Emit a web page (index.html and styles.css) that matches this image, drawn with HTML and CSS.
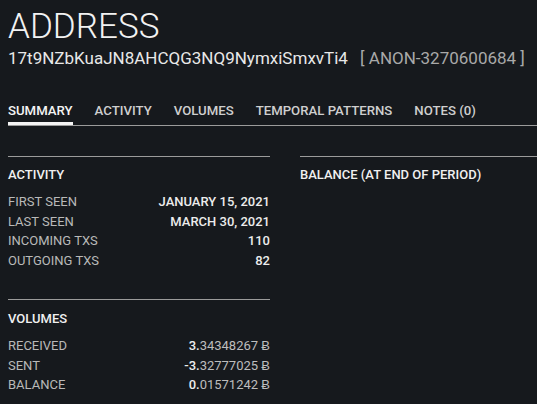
FILE: index.html
```html
<!DOCTYPE html>
<html>
<head>
<meta charset="utf-8">
<link rel="stylesheet" href="styles.css">
</head>
<body>
<div class="page">
  <h1 class="title">ADDRESS</h1>
  <div class="addr">17t9NZbKuaJN8AHCQG3NQ9NymxiSmxvTi4 <span class="anon">[ ANON-3270600684 ]</span></div>
  <nav class="tabs">
    <span class="tab active">SUMMARY</span>
    <span class="tab">ACTIVITY</span>
    <span class="tab">VOLUMES</span>
    <span class="tab">TEMPORAL PATTERNS</span>
    <span class="tab">NOTES (0)</span>
  </nav>
  <div class="cols">
    <div class="col">
      <section class="sec">
        <h2 class="sec-title">ACTIVITY</h2>
        <div class="row"><span class="lbl">FIRST SEEN</span><span class="val">JANUARY 15, 2021</span></div>
        <div class="row"><span class="lbl">LAST SEEN</span><span class="val">MARCH 30, 2021</span></div>
        <div class="row"><span class="lbl">INCOMING TXS</span><span class="val">110</span></div>
        <div class="row"><span class="lbl">OUTGOING TXS</span><span class="val">82</span></div>
      </section>
      <section class="sec sec2">
        <h2 class="sec-title">VOLUMES</h2>
        <div class="row"><span class="lbl">RECEIVED</span><span class="num"><b>3.</b>34348267 Ƀ</span></div>
        <div class="row"><span class="lbl">SENT</span><span class="num"><b>-3.</b>32777025 Ƀ</span></div>
        <div class="row"><span class="lbl">BALANCE</span><span class="num"><b>0.</b>01571242 Ƀ</span></div>
      </section>
    </div>
    <div class="col col-right">
      <section class="sec">
        <h2 class="sec-title">BALANCE (AT END OF PERIOD)</h2>
      </section>
    </div>
  </div>
</div>
</body>
</html>
```

FILE: styles.css
```css
html, body {
  margin: 0;
  padding: 0;
  background: #16191d;
  overflow: hidden;
}
body {
  font-family: Roboto, "Liberation Sans", sans-serif;
  color: #e6e6e6;
  width: 537px;
  height: 404px;
}
.page {
  padding: 7px 0 0 8px;
}
.title {
  margin: 0;
  font-size: 35px;
  font-weight: 300;
  line-height: 40px;
  color: #f2f2f2;
}
.addr {
  margin-top: 1px;
  font-size: 17px;
  line-height: 20px;
  color: #e8e8e8;
  white-space: nowrap;
}
.anon {
  margin-left: 8px;
  color: #a9a9a9;
}
.tabs {
  margin-top: 35px;
  display: flex;
  gap: 22px;
  border-bottom: 1px solid #9b9b9b;
}
.tab {
  font-size: 13.2px;
  font-weight: 500;
  line-height: 16px;
  padding: 0 0 6px;
  color: #cfcfcf;
  position: relative;
}
.tab.active {
  color: #f4f4f4;
}
.tab.active::after {
  content: "";
  position: absolute;
  left: 0;
  right: 0;
  bottom: 0;
  height: 3px;
  background: #f4f4f4;
}
.cols {
  margin-top: 30px;
  display: grid;
  grid-template-columns: 262px 262px;
  column-gap: 30px;
}
.sec {
  border-top: 1px solid #9b9b9b;
  padding-top: 10px;
}
.sec2 {
  margin-top: 29px;
  padding-top: 11px;
}
.sec-title {
  margin: 0 0 9px;
  font-size: 13px;
  font-weight: 500;
  line-height: 16px;
  color: #f0f0f0;
}
.row {
  display: flex;
  justify-content: space-between;
  font-size: 13px;
  line-height: 19.5px;
}
.lbl {
  color: #b9b9b9;
}
.val {
  font-weight: 500;
  color: #ececec;
}
.num {
  color: #bdbdbd;
}
.num b {
  font-weight: 500;
  color: #ececec;
}
```
